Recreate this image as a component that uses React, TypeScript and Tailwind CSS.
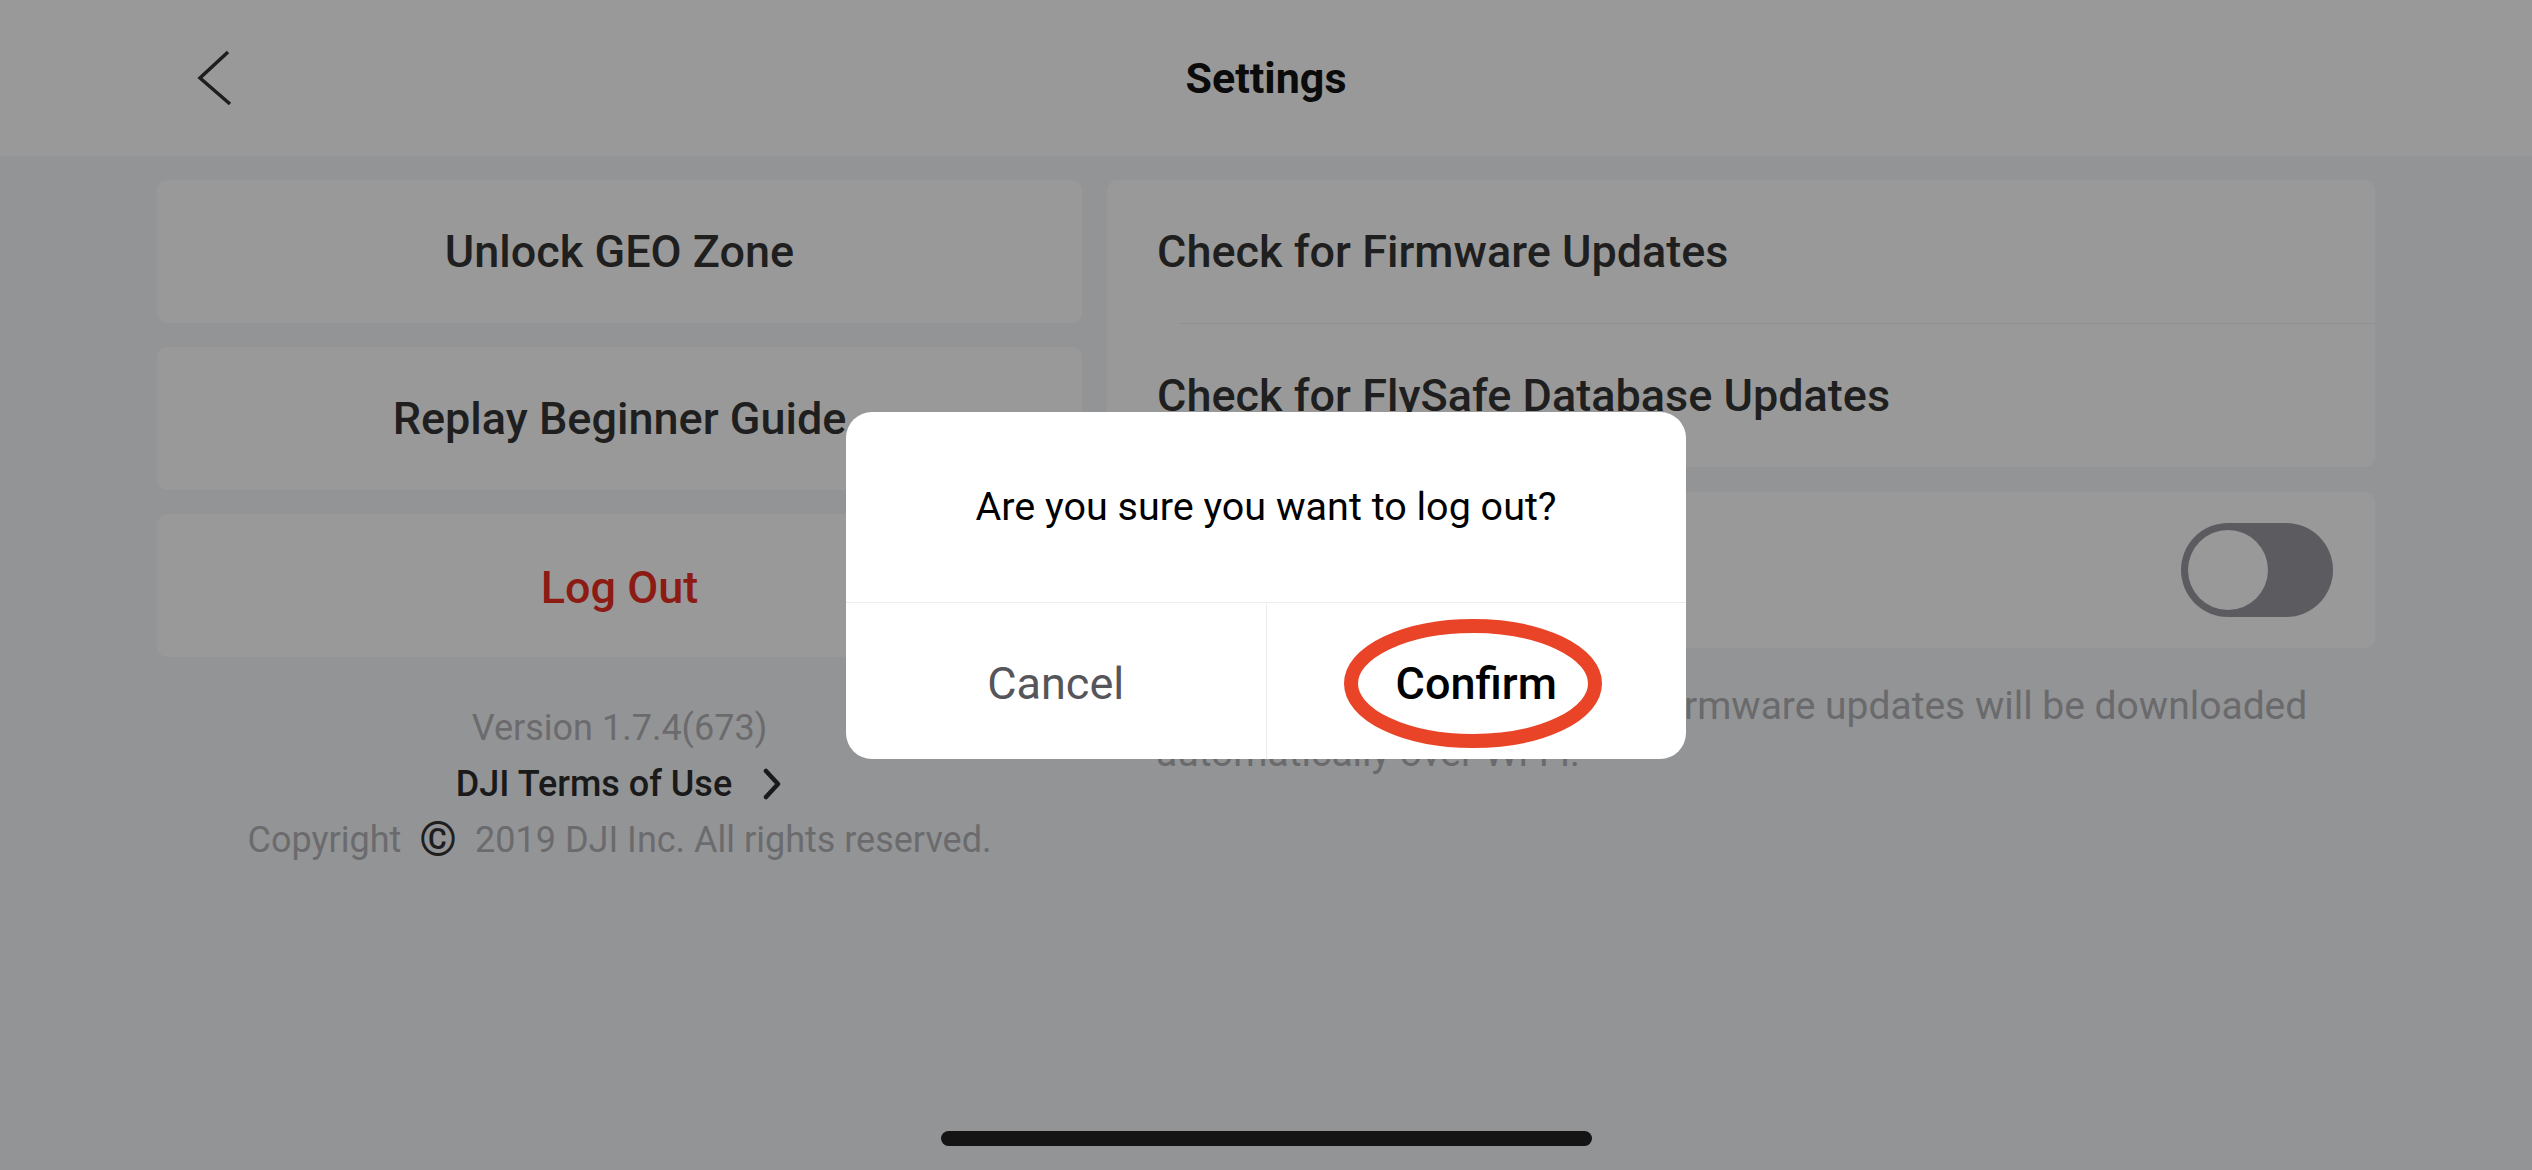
import React from 'react';

function BackIcon() {
  return (
    <svg width="38" height="60" viewBox="0 0 38 60" fill="none">
      <path d="M32 4 L4 30 L34 56" stroke="#1e1e1e" strokeWidth="3.5" strokeLinejoin="miter" />
    </svg>
  );
}

function ChevronRight() {
  return (
    <svg width="22" height="32" viewBox="0 0 22 32" fill="none">
      <path d="M5 3 L17 16 L5 29" stroke="#1a1a1a" strokeWidth="4.5" strokeLinecap="round" strokeLinejoin="round" />
    </svg>
  );
}

function Toggle() {
  return (
    <div className="w-[152px] h-[94px] rounded-full bg-[#5c5b60] p-[7px] flex items-center">
      <div className="w-[80px] h-[80px] rounded-full bg-[#999999]" />
    </div>
  );
}

export default function App() {
  return (
    <div className="relative w-[2532px] h-[1170px] overflow-hidden bg-[#939496] flex flex-col font-[Roboto,sans-serif]">
      {/* Header */}
      <div className="h-[156px] bg-[#999999] flex items-center">
        <div className="w-[400px] pl-[196px] flex items-center">
          <BackIcon />
        </div>
        <div className="flex-1 text-center text-[43px] font-bold leading-none text-[#0b0b0b]">Settings</div>
        <div className="w-[400px]" />
      </div>

      {/* Body */}
      <div className="flex-1 flex gap-[25px] px-[157px] pt-[24px]">
        {/* Left column */}
        <div className="w-[925px] flex flex-col">
          <div className="flex flex-col gap-[24px]">
            <div className="h-[143px] rounded-[10px] bg-[#999999] flex items-center justify-center text-[45px] font-medium text-[#1f1f1f]">
              Unlock GEO Zone
            </div>
            <div className="h-[143px] rounded-[10px] bg-[#999999] flex items-center justify-center text-[45px] font-medium text-[#1f1f1f]">
              Replay Beginner Guide
            </div>
            <div className="h-[143px] rounded-[10px] bg-[#999999] flex items-center justify-center pt-[4px] text-[45px] font-medium text-[#8c1b14]">
              Log Out
            </div>
          </div>

          <div className="mt-[43px] flex flex-col items-center text-[36px]">
            <div className="leading-[56px] text-[#6b6b6d]">Version 1.7.4(673)</div>
            <div className="leading-[56px] flex items-center gap-[29px] font-medium text-[#1a1a1a]">
              <span>DJI Terms of Use</span>
              <ChevronRight />
            </div>
            <div className="leading-[56px] flex items-center text-[#6b6b6d]">
              <span>Copyright</span>
              <span className="mx-[18px] text-[48px] font-bold leading-none text-[#1e1e1e]">©</span>
              <span>2019 DJI Inc. All rights reserved.</span>
            </div>
          </div>
        </div>

        {/* Right column */}
        <div className="flex-1 flex flex-col">
          <div className="rounded-[10px] bg-[#999999]">
            <div className="h-[143px] flex items-center pl-[50px] text-[45px] font-medium text-[#1f1f1f]">
              Check for Firmware Updates
            </div>
            <div className="ml-[73px] h-px bg-[#8f8f90]" />
            <div className="h-[143px] flex items-center pl-[50px] text-[45px] font-medium text-[#1f1f1f]">
              Check for FlySafe Database Updates
            </div>
          </div>

          <div className="mt-[25px] h-[156px] rounded-[10px] bg-[#999999] flex items-center justify-between pl-[50px] pr-[42px]">
            <span className="text-[45px] font-medium text-[#1f1f1f]">Auto Update</span>
            <Toggle />
          </div>

          <p className="mt-[35px] pl-[49px] pr-[40px] text-[39px] leading-[47px] text-[#6a6a6c]">
            When switched on, the latest firmware updates will be downloaded automatically over Wi-Fi.
          </p>
        </div>
      </div>

      {/* Home indicator */}
      <div className="pb-[24px] flex justify-center">
        <div className="w-[651px] h-[15px] rounded-full bg-[#141414]" />
      </div>

      {/* Dialog */}
      <div className="absolute inset-0 flex items-center justify-center">
        <div className="w-[840px] h-[347px] rounded-[26px] bg-white overflow-hidden flex flex-col">
          <div className="h-[191px] flex items-center justify-center border-b border-[#ececec] text-[39.5px] text-black">
            Are you sure you want to log out?
          </div>
          <div className="flex-1 flex">
            <div className="flex-1 flex items-center justify-center pt-[7px] border-r border-[#ececec] text-[45px] text-[#55555a]">
              Cancel
            </div>
            <div className="relative flex-1 flex items-center justify-center pt-[7px] text-[45px] font-medium text-black">
              <span className="relative z-10">Confirm</span>
              <svg className="absolute left-[77px] top-[16px]" width="258" height="129" viewBox="0 0 258 129" fill="none">
                <ellipse cx="129" cy="64.5" rx="122" ry="57.5" stroke="#e94427" strokeWidth="14" />
              </svg>
            </div>
          </div>
        </div>
      </div>
    </div>
  );
}
